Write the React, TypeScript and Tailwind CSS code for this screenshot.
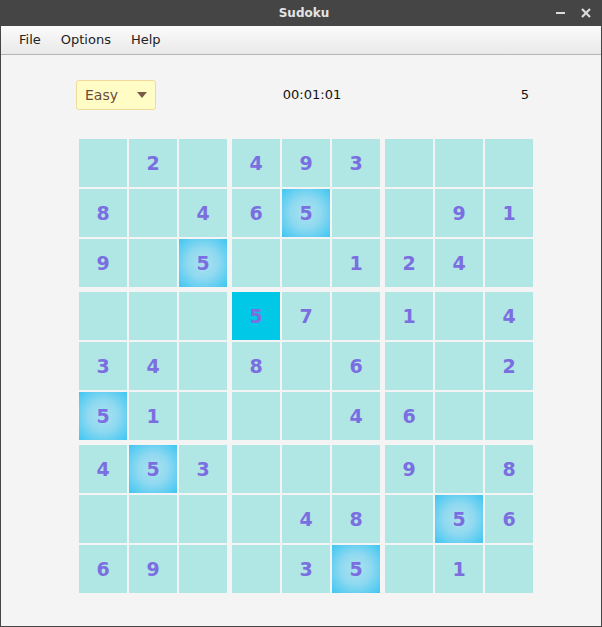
type Cell = { v: number | null; hl?: boolean; sel?: boolean };

const raw: string[] = [
  ".2.493...",
  "8.46h..91",
  "9.h..124.",
  "...s7.1.4",
  "34.8.6..2",
  "h1...46..",
  "4h3...9.8",
  "....48.h6",
  "69..3h.1.",
];

// h = highlighted 5, s = selected 5
const board: Cell[][] = raw.map((row) =>
  row.split("").map((ch) => {
    if (ch === ".") return { v: null };
    if (ch === "h") return { v: 5, hl: true };
    if (ch === "s") return { v: 5, sel: true };
    return { v: Number(ch) };
  })
);

function SudokuCell({ cell }: { cell: Cell }) {
  let bg = "bg-[#b0e6e4]";
  if (cell.hl) bg = "bg-[radial-gradient(circle,#ace2ee_0%,#8fd9f0_45%,#3ec6f2_100%)]";
  if (cell.sel) bg = "bg-[#00c8e6]";
  return (
    <div
      className={`flex h-[48px] w-[48px] items-center justify-center text-[19px] font-bold text-[#7b6ee0] ${bg}`}
    >
      {cell.v ?? ""}
    </div>
  );
}

function Box({ br, bc }: { br: number; bc: number }) {
  const cells: Cell[] = [];
  for (let r = 0; r < 3; r++) {
    for (let c = 0; c < 3; c++) {
      cells.push(board[br * 3 + r][bc * 3 + c]);
    }
  }
  return (
    <div className="grid grid-cols-3 gap-[2px]">
      {cells.map((cell, i) => (
        <SudokuCell key={i} cell={cell} />
      ))}
    </div>
  );
}

export default function App() {
  return (
    <div
      className="flex h-[627px] w-[602px] flex-col border-x border-b border-[#454545] bg-[#f4f4f4]"
      style={{ fontFamily: '"DejaVu Sans", sans-serif' }}
    >
      {/* title bar */}
      <div className="relative flex h-[26px] shrink-0 items-center justify-center bg-[#454545]">
        <span className="pl-[6px] text-[12px] font-bold text-[#e4e4e4]">Sudoku</span>
        <div className="absolute right-[10px] top-0 flex h-full items-center gap-[16px]">
          <span className="block h-[2px] w-[9px] bg-[#dcdcdc]" />
          <svg width="10" height="10" viewBox="0 0 10 10">
            <path d="M1 1 L9 9 M9 1 L1 9" stroke="#dcdcdc" strokeWidth="2.2" />
          </svg>
        </div>
      </div>

      {/* menu bar */}
      <div className="flex h-[29px] shrink-0 items-center border-b border-[#b4b4b4] bg-gradient-to-b from-[#fbfbfb] to-[#e9e9e9] pl-[8px] text-[13px] text-[#222]">
        <span className="px-[10px]">File</span>
        <span className="px-[10px]">Options</span>
        <span className="px-[10px]">Help</span>
      </div>

      {/* controls */}
      <div className="ml-[75px] mt-[25px] grid w-[472px] grid-cols-3 items-center">
        <div className="flex h-[30px] w-[80px] items-center justify-between rounded-[3px] border border-[#f3d89c] bg-[#fffcc6] px-[8px] text-[14px] text-[#6b4a38]">
          <span>Easy</span>
          <svg width="10" height="6" viewBox="0 0 10 6">
            <path d="M0 0 L10 0 L5 6 Z" fill="#7a5a48" />
          </svg>
        </div>
        <div className="text-center text-[13px] text-[#111]">00:01:01</div>
        <div className="pr-[19px] text-right text-[13px] text-[#111]">5</div>
      </div>

      {/* board */}
      <div className="ml-[78px] mt-[29px] flex flex-col gap-[5px]">
        {[0, 1, 2].map((br) => (
          <div key={br} className="flex gap-[5px]">
            {[0, 1, 2].map((bc) => (
              <Box key={bc} br={br} bc={bc} />
            ))}
          </div>
        ))}
      </div>
    </div>
  );
}
